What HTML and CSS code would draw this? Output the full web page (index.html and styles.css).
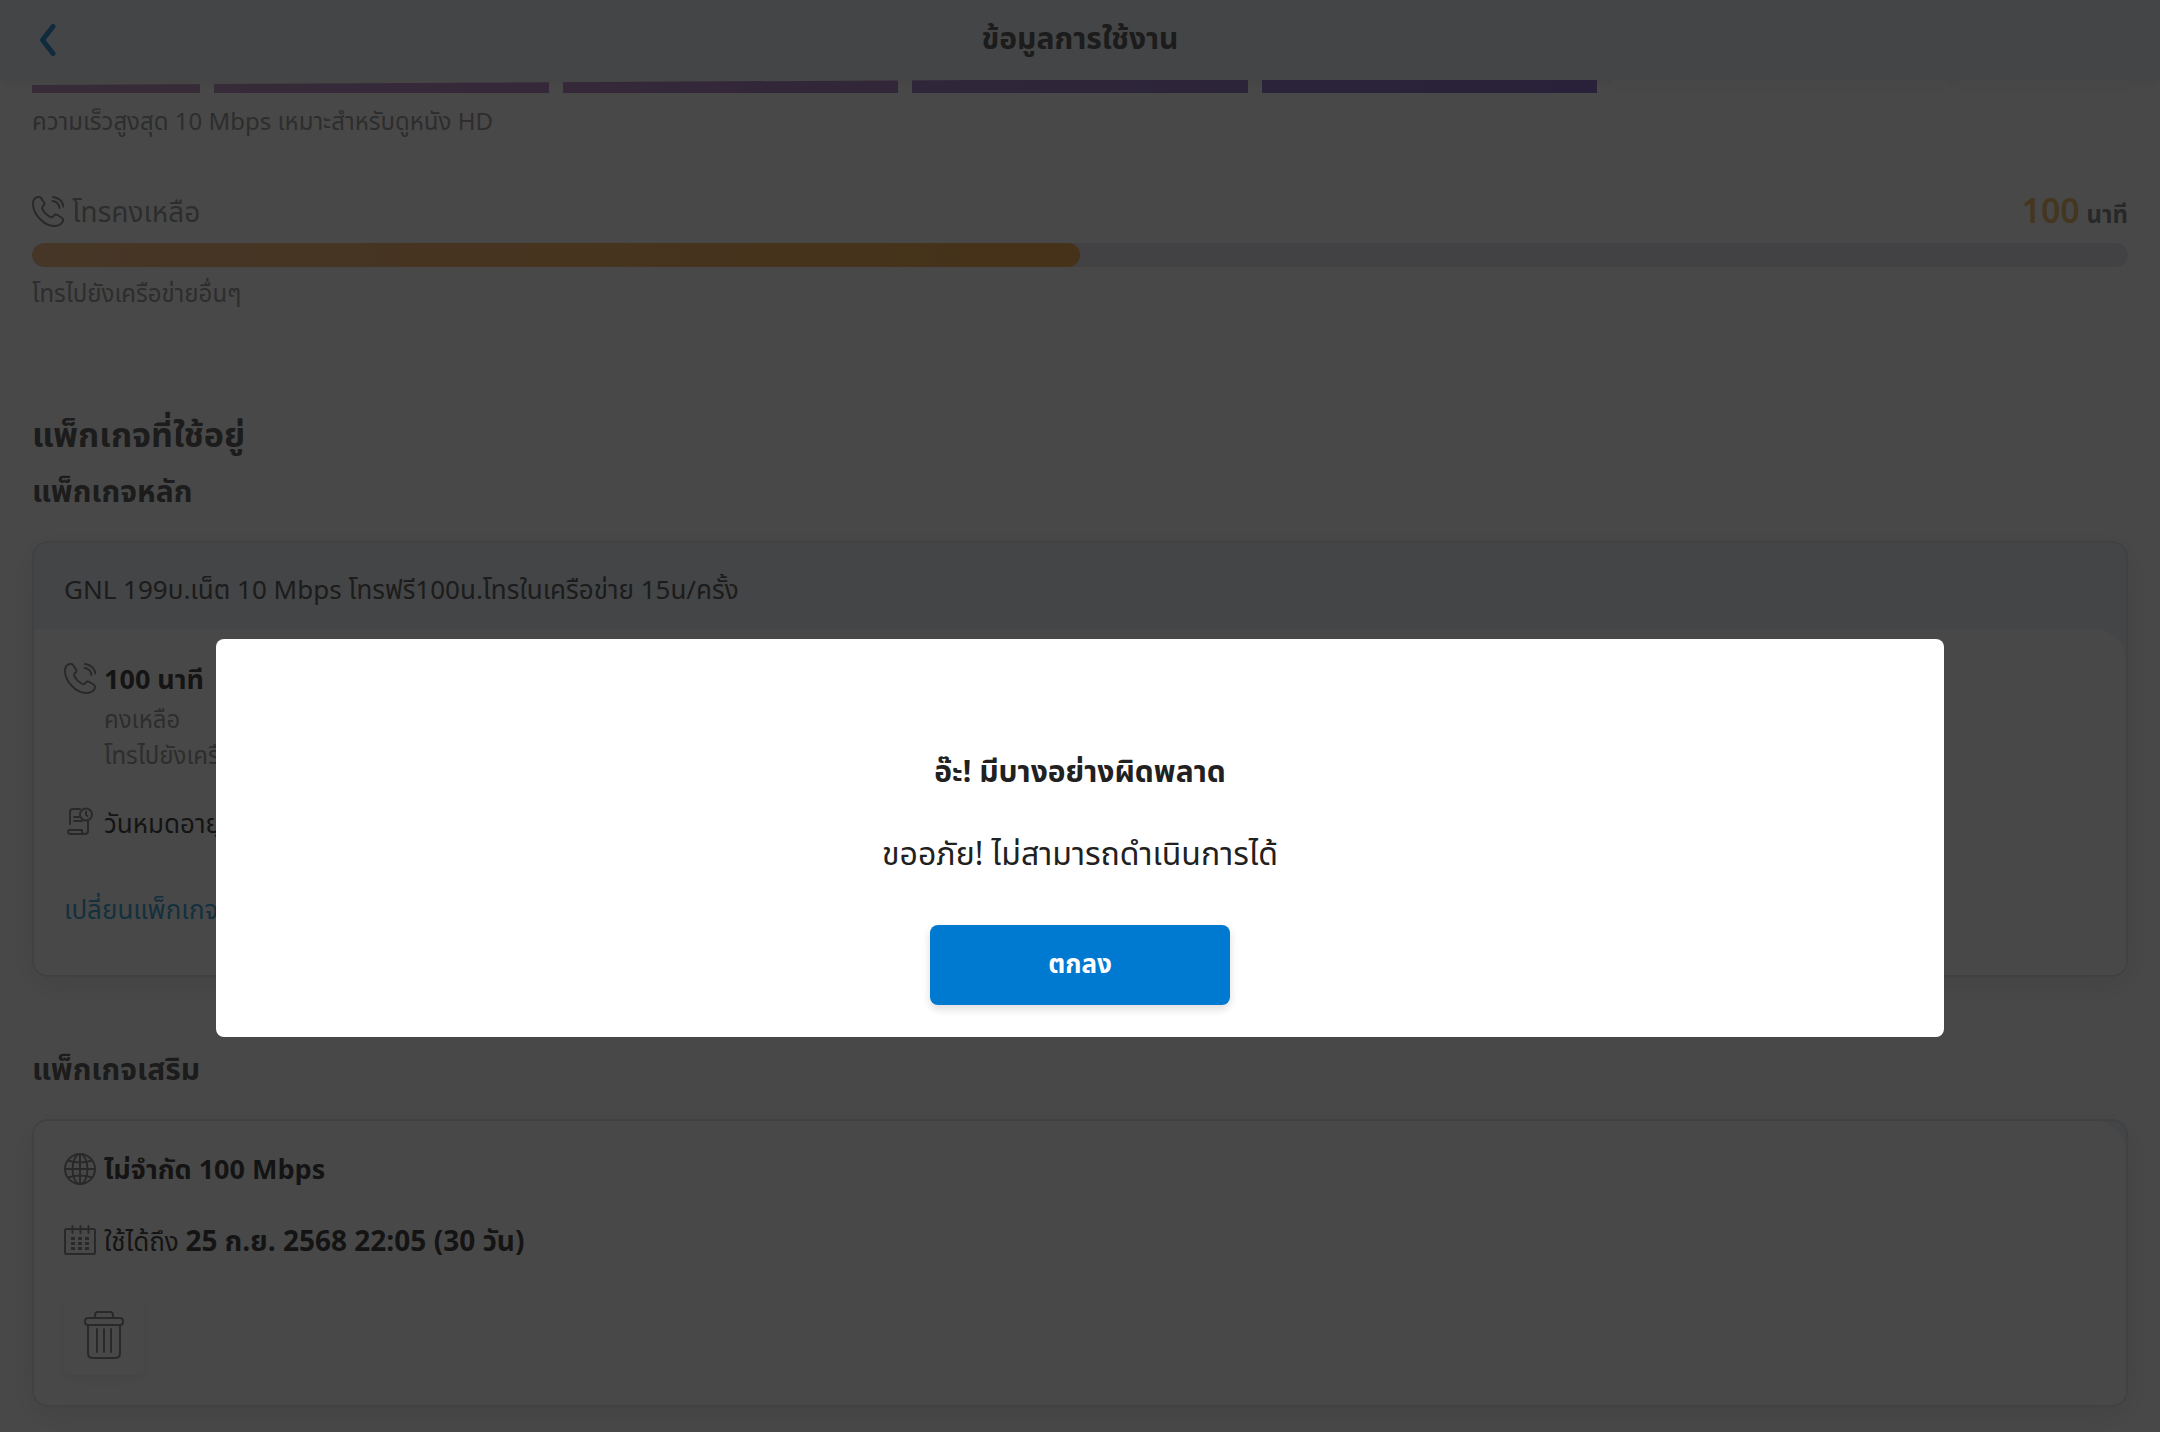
FILE: index.html
```html
<!DOCTYPE html>
<html lang="th">
<head>
    <meta charset="UTF-8">
    <meta name="viewport" content="width=device-width, initial-scale=1.0">
    <title>ข้อมูลการใช้งาน</title>
    <link rel="stylesheet" href="styles.css">
</head>
<body>
    <!-- Shared icons -->
    <svg class="sprite" aria-hidden="true">
        <symbol id="icon-phone" viewBox="0 0 32 32">
            <path d="M5.500 1C2 2 1 5 1 8c0 10 11 22 21 22 4 0 7-1.500 8.500-4 1-2 .5-3.500-1-4.500l-4-2.500c-1.500-1-3-.5-4 1s-2.500 1.500-4 .5c-2.500-1.500-6-5-7-7-.5-1.500-.5-2.500.5-3.500 1.500-1 2-2 1-3.500L9 2C8 .8 6.800.6 5.500 1z"/>
            <path d="M21 1c5.500.5 10 4.500 10.500 9.500M20.500 5c4 .5 6.500 3 7 7"/>
        </symbol>
    </svg>

    <header class="header">
        <button class="back" type="button" aria-label="ย้อนกลับ">
            <svg width="16" height="32" viewBox="0 0 16 32"><path d="M13 2.500 2.500 16 13 29.500"/></svg>
        </button>
        <h1 class="header-title">ข้อมูลการใช้งาน</h1>
    </header>

    <main class="content">
        <!-- Internet speed -->
        <section class="speed">
            <div class="speed-bar">
                <span class="seg seg-half seg-1"></span>
                <span class="seg seg-2"></span>
                <span class="seg seg-3"></span>
                <span class="seg seg-4"></span>
                <span class="seg seg-5"></span>
                <span class="seg"></span>
                <span class="seg seg-half"></span>
            </div>
            <p class="note">ความเร็วสูงสุด 10 Mbps เหมาะสำหรับดูหนัง HD</p>
        </section>

        <!-- Calls left -->
        <section class="calls">
            <div class="calls-top">
                <svg class="icon"><use href="#icon-phone"/></svg>
                <span class="calls-label">โทรคงเหลือ</span>
                <span class="calls-left"><span class="calls-value">100</span> <span class="calls-unit">นาที</span></span>
            </div>
            <div class="bar"><div class="bar-fill" style="width: 50%"></div></div>
            <p class="note">โทรไปยังเครือข่ายอื่นๆ</p>
        </section>

        <h2 class="title">แพ็กเกจที่ใช้อยู่</h2>
        <h3 class="subtitle">แพ็กเกจหลัก</h3>

        <section class="card card-main">
            <div class="card-head">GNL 199บ.เน็ต 10 Mbps โทรฟรี100น.โทรในเครือข่าย 15น/ครั้ง</div>
            <div class="card-body">
                <div class="row">
                    <svg class="icon"><use href="#icon-phone"/></svg>
                    <strong>100 นาที</strong>
                </div>
                <div class="row-notes">
                    <p>คงเหลือ</p>
                    <p>โทรไปยังเครือข่ายอื่นๆ</p>
                </div>
                <div class="row row-expire">
                    <svg class="icon icon-bill" viewBox="0 0 32 32">
                        <path d="M6 17V5q0-3 3-3h7M10 10h5M10 14h8M24 14v10q0 3-3 3H7q-3 0-3-2.500 0-1.500 1.500-1.500H18v1.500q0 2.500 3 2.500"/>
                        <circle cx="22" cy="7.500" r="6"/>
                        <path d="M22 4.500V8l1.500 1"/>
                    </svg>
                    <span>วันหมดอายุ</span>
                </div>
                <a class="link" href="#">เปลี่ยนแพ็กเกจ</a>
            </div>
        </section>

        <h3 class="subtitle">แพ็กเกจเสริม</h3>

        <section class="card card-extra">
            <div class="card-body">
                <div class="row">
                    <svg class="icon" viewBox="0 0 32 32">
                        <circle cx="16" cy="16" r="15"/>
                        <ellipse cx="16" cy="16" rx="7.500" ry="15"/>
                        <path d="M16 1v30M1 16h30M4 7.500q12 4 24 0M4 24.500q12-4 24 0"/>
                    </svg>
                    <strong>ไม่จำกัด 100 Mbps</strong>
                </div>
                <div class="row row-date">
                    <svg class="icon" viewBox="0 0 32 32">
                        <rect x="1" y="4" width="30" height="25" rx="1.500"/>
                        <path d="M8.500 1v7M16.500 1v7M24.500 1v7"/>
                        <path class="days" d="M7 13.500h4M14 13.500h4M21 13.500h4M7 18.500h4M14 18.500h4M21 18.500h4M7 23.500h4M14 23.500h4M21 23.500h4"/>
                    </svg>
                    <span>ใช้ได้ถึง <strong>25 ก.ย. 2568 22:05 (30 วัน)</strong></span>
                </div>
                <button class="trash" type="button" aria-label="ลบแพ็กเกจ">
                    <svg width="40" height="48" viewBox="0 0 40 48">
                        <path d="M11 7V4q0-3 3-3h12q3 0 3 3v3"/>
                        <rect x="1" y="7" width="38" height="7" rx="3"/>
                        <path d="M4 14v28q0 5 5 5h22q5 0 5-5V14M13 18v23M20 18v23M27 18v23"/>
                    </svg>
                </button>
            </div>
        </section>
    </main>

    <!-- Error popup -->
    <div class="overlay">
        <div class="modal" role="alertdialog" aria-labelledby="modal-title">
            <h2 class="modal-title" id="modal-title">อ๊ะ! มีบางอย่างผิดพลาด</h2>
            <p class="modal-text">ขออภัย! ไม่สามารถดำเนินการได้</p>
            <button class="modal-button" type="button">ตกลง</button>
        </div>
    </div>
</body>
</html>
```
FILE: styles.css
```css
* {
    box-sizing: border-box;
}

body {
    margin: 0;
    font-family: "Noto Sans Thai", "Noto Sans", sans-serif;
    font-size: 26px;
    line-height: 36px;
    color: #212121;
    background-color: #ffffff;
    overflow: hidden;
}

h1, h2, h3, p {
    margin: 0;
}

button {
    font-family: inherit;
    border: none;
    cursor: pointer;
}

svg {
    fill: none;
    stroke: #787878;
    stroke-width: 2;
    stroke-linecap: round;
    stroke-linejoin: round;
}

.sprite {
    display: none;
}

.icon {
    width: 32px;
    height: 32px;
    flex: none;
    margin-bottom: 4px;
}

/* Header */
.header {
    display: grid;
    grid-template-columns: 80px 1fr 80px;
    align-items: center;
    height: 80px;
    background-color: #ebeff6;
    border-radius: 0 0 8px 8px;
    box-shadow: 0 2px 12px rgba(0, 0, 0, 0.1);
}

.back {
    display: flex;
    padding: 0 0 0 40px;
    background: none;
}

.back svg {
    stroke: #0a80d0;
    stroke-width: 5;
}

.header-title {
    font-size: 30px;
    line-height: 40px;
    text-align: center;
    color: #414141;
}

.content {
    padding: 0 32px;
}

/* Speed bar */
.speed-bar {
    display: flex;
    gap: 14px;
    height: 13px;
    clip-path: polygon(0 5px, 45% 0, 100% 0, 100% 100%, 0 100%);
}

.seg {
    flex: 2;
    background-color: #fafafa;
}

.seg-half {
    flex: 1;
}

.seg-1 { background-color: #b880b8; }
.seg-2 { background: linear-gradient(90deg, #b47ebc, #ac76bc); }
.seg-3 { background: linear-gradient(90deg, #aa76bc, #9c70bc); }
.seg-4 { background: linear-gradient(90deg, #986ebc, #8664bc); }
.seg-5 { background: linear-gradient(90deg, #8462bc, #7658bc); }

.note {
    font-size: 24px;
    color: #8c8c8c;
}

.speed .note {
    margin-top: 12px;
}

/* Calls */
.calls {
    margin-top: 54px;
}

.calls-top {
    display: flex;
    align-items: center;
    gap: 8px;
    height: 38px;
}

.calls-label {
    font-size: 28px;
    color: #8c8c8c;
}

.calls-left {
    margin-left: auto;
    font-weight: bold;
}

.calls-value {
    font-size: 34px;
    font-weight: 600;
    color: #f0b054;
}

.calls-unit {
    font-size: 24px;
    color: #757575;
}

.bar {
    height: 24px;
    margin: 10px 0;
    border-radius: 12px;
    background-color: #e6e6ef;
    overflow: hidden;
}

.bar-fill {
    height: 100%;
    border-radius: 12px;
    background: linear-gradient(90deg, #f6b070, #f2a030);
}

/* Packages */
.title {
    margin-top: 98px;
    font-size: 34px;
    line-height: 52px;
    color: #414141;
}

.subtitle {
    margin-top: 8px;
    font-size: 30px;
    line-height: 44px;
    color: #414141;
}

.card {
    margin: 26px 0 72px;
    border: 2px solid #dedede;
    border-radius: 16px;
    background-color: #ebeff6;
    box-shadow: 0 8px 32px rgba(0, 0, 0, 0.1);
    overflow: hidden;
}

.card-head {
    padding: 30px 30px 20px;
    color: #414141;
}

.card-body {
    padding: 32px 30px 30px;
    border-top-right-radius: 32px;
    background-color: #ffffff;
}

.card-main .card-body {
    padding: 34px 30px 46px;
}

.row {
    display: flex;
    align-items: center;
    gap: 8px;
}

.row strong {
    font-size: 27px;
}

.row-notes {
    padding-left: 40px;
    margin-top: 4px;
    font-size: 24px;
    color: #8c8c8c;
}

.row-expire {
    margin-top: 32px;
}

.link {
    display: block;
    margin-top: 50px;
    color: #2098d0;
    text-decoration: none;
}

.row-date {
    margin-top: 36px;
}

.row-date strong {
    font-size: 28px;
}

.days {
    stroke-width: 3;
    stroke-linecap: butt;
}

.trash {
    display: flex;
    align-items: center;
    justify-content: center;
    width: 80px;
    height: 80px;
    margin-top: 34px;
    padding: 0;
    border-radius: 8px;
    background-color: #ffffff;
    box-shadow: 0 4px 16px rgba(0, 0, 0, 0.08);
}

/* Popup */
.overlay {
    position: fixed;
    inset: 0;
    display: flex;
    align-items: center;
    justify-content: center;
    padding-top: 244px;
    background-color: rgba(17, 17, 17, 0.77);
}

.modal {
    display: flex;
    flex-direction: column;
    align-items: center;
    width: 80%;
    padding: 112px 32px 32px;
    border-radius: 8px;
    background-color: #ffffff;
}

.modal-title {
    font-size: 30px;
    line-height: 44px;
}

.modal-text {
    margin: 38px 0 48px;
    font-size: 32px;
    line-height: 44px;
}

.modal-button {
    width: 300px;
    height: 80px;
    border-radius: 8px;
    font-size: 26px;
    font-weight: bold;
    color: #ffffff;
    background-color: #0079d1;
    box-shadow: 0 4px 8px rgba(0, 0, 0, 0.14);
}
```
